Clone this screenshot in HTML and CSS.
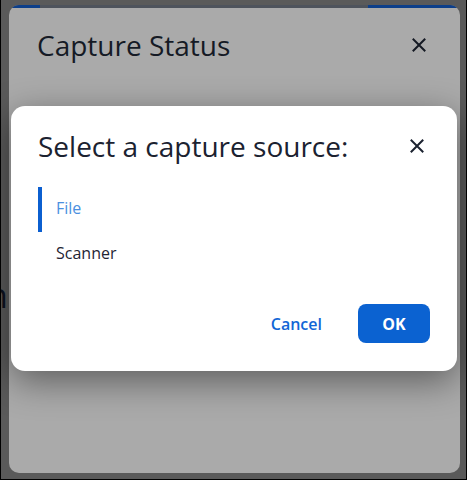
FILE: index.html
```html
<!DOCTYPE html>
<html lang="en">
<head>
    <meta charset="UTF-8">
    <meta name="viewport" content="width=device-width, initial-scale=1.0">
    <title>Capture Status</title>
    <link rel="stylesheet" href="styles.css">
</head>
<body>

<div class="screen">
    <span class="page-text">n</span>

    <div class="status-dialog">
        <div class="progress">
            <div class="progress-bit left"></div>
            <div class="progress-bit right"></div>
        </div>
        <div class="status-head">
            <h2>Capture Status</h2>
            <button class="close dim" aria-label="Close">
                <svg width="14" height="14" viewBox="0 0 14 14"><path d="M1.5 1.5 L12.5 12.5 M12.5 1.5 L1.5 12.5" stroke="currentColor" stroke-width="2" stroke-linecap="square"/></svg>
            </button>
        </div>
    </div>

    <div class="picker">
        <div class="picker-head">
            <h2>Select a capture source:</h2>
            <button class="close" aria-label="Close">
                <svg width="14" height="14" viewBox="0 0 14 14"><path d="M1.5 1.5 L12.5 12.5 M12.5 1.5 L1.5 12.5" stroke="currentColor" stroke-width="2" stroke-linecap="square"/></svg>
            </button>
        </div>
        <ul class="sources">
            <li class="selected">File</li>
            <li>Scanner</li>
        </ul>
        <div class="actions">
            <button class="btn-text">Cancel</button>
            <button class="btn-primary">OK</button>
        </div>
    </div>
</div>

</body>
</html>
```

FILE: styles.css
```css
* {
    box-sizing: border-box;
}
body {
    margin: 0;
    font-family: "Open Sans", "Noto Sans", Arial, sans-serif;
}
.screen {
    position: relative;
    width: 467px;
    height: 480px;
    background-color: #5a5a5a;
    border-left: 1px solid #000;
    border-right: 1px solid #000;
    border-bottom: 1px solid #000;
    overflow: hidden;
}
.page-text {
    position: absolute;
    left: -14px;
    top: 272px;
    font-size: 34px;
    color: #0d1220;
}

/* dimmed dialog behind */
.status-dialog {
    position: absolute;
    left: 8px;
    top: 5px;
    width: 451px;
    height: 468px;
    background-color: #aaaaaa;
    border-radius: 10px;
    overflow: hidden;
}
.progress {
    position: relative;
    height: 3px;
    background-color: #4e535c;
}
.progress-bit {
    position: absolute;
    top: 0;
    height: 3px;
    background-color: #0d3f8a;
}
.progress-bit.left {
    left: 0;
    width: 31px;
}
.progress-bit.right {
    left: 359px;
    right: 0;
}
.status-head {
    display: flex;
    align-items: center;
    justify-content: space-between;
    padding: 18px 32px 0 28px;
}
.status-head h2 {
    margin: 0;
    font-size: 28px;
    font-weight: 400;
    line-height: 38px;
    color: #151a25;
}

.close {
    width: 18px;
    height: 18px;
    padding: 0;
    border: none;
    background: none;
    color: #1b2230;
    display: flex;
    align-items: center;
    justify-content: center;
    cursor: pointer;
}
.close.dim {
    color: #141923;
}

/* front dialog */
.picker {
    position: absolute;
    left: 10px;
    top: 106px;
    width: 446px;
    height: 265px;
    background-color: #fff;
    border-radius: 14px;
    box-shadow: 0 10px 36px rgba(0,0,0,0.45);
    padding: 21px 27px 28px 27px;
}
.picker-head {
    display: flex;
    align-items: center;
    justify-content: space-between;
    padding-right: 4px;
}
.picker-head h2 {
    margin: 0;
    font-size: 28px;
    font-weight: 400;
    line-height: 38px;
    color: #1b2230;
}
.sources {
    list-style: none;
    margin: 22px 0 0 0;
    padding: 0;
}
.sources li {
    height: 45px;
    line-height: 43px;
    padding-left: 14px;
    font-size: 16px;
    color: #1f2533;
    border-left: 4px solid transparent;
}
.sources li.selected {
    color: #4a8fe0;
    border-left-color: #0b5fd0;
}
.actions {
    display: flex;
    justify-content: flex-end;
    align-items: center;
    gap: 20px;
    margin-top: 27px;
}
.btn-text {
    border: none;
    background: none;
    font-family: inherit;
    font-size: 16px;
    font-weight: 600;
    color: #1266d6;
    padding: 0 16px;
    height: 39px;
    cursor: pointer;
}
.btn-primary {
    width: 72px;
    height: 39px;
    border: none;
    border-radius: 8px;
    background-color: #0b62d1;
    color: #fff;
    font-family: inherit;
    font-size: 16px;
    font-weight: 700;
    cursor: pointer;
}
```
